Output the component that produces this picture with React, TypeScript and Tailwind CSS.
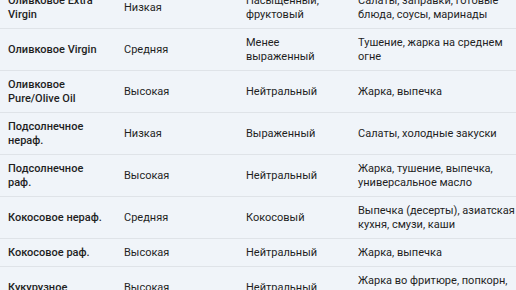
const ROWS: [string, string, string, string][] = [
  ["Оливковое Extra Virgin", "Низкая", "Насыщенный, фруктовый", "Салаты, заправки, готовые\nблюда, соусы, маринады"],
  ["Оливковое Virgin", "Средняя", "Менее выраженный", "Тушение, жарка на среднем\nогне"],
  ["Оливковое Pure/Olive Oil", "Высокая", "Нейтральный", "Жарка, выпечка"],
  ["Подсолнечное нераф.", "Низкая", "Выраженный", "Салаты, холодные закуски"],
  ["Подсолнечное раф.", "Высокая", "Нейтральный", "Жарка, тушение, выпечка,\nуниверсальное масло"],
  ["Кокосовое нераф.", "Средняя", "Кокосовый", "Выпечка (десерты), азиатская\nкухня, смузи, каши"],
  ["Кокосовое раф.", "Высокая", "Нейтральный", "Жарка, выпечка"],
  ["Кукурузное", "Высокая", "Нейтральный", "Жарка во фритюре, попкорн,\nвыпечка"],
];

export default function App() {
  return (
    <div className="w-[516px] h-[290px] overflow-hidden bg-[#f0f4f9] text-[#1f1f1f] font-['Roboto',sans-serif]">
      <table className="-mt-[13px] w-[516px] table-fixed border-collapse text-[11px] leading-[14px]">
        <colgroup>
          <col className="w-[116px]" />
          <col className="w-[122px]" />
          <col className="w-[112px]" />
          <col className="w-[166px]" />
        </colgroup>
        <tbody>
          {ROWS.map(([name, temp, taste, use]) => (
            <tr key={name} className="border-b border-[#dfe3e8]">
              <td className="px-2 py-[6.5px] align-middle font-medium">{name}</td>
              <td className="px-2 py-[6.5px] align-middle">{temp}</td>
              <td className="px-2 py-[6.5px] align-middle">{taste}</td>
              <td className="px-2 py-[6.5px] align-middle whitespace-pre">{use}</td>
            </tr>
          ))}
        </tbody>
      </table>
    </div>
  );
}
